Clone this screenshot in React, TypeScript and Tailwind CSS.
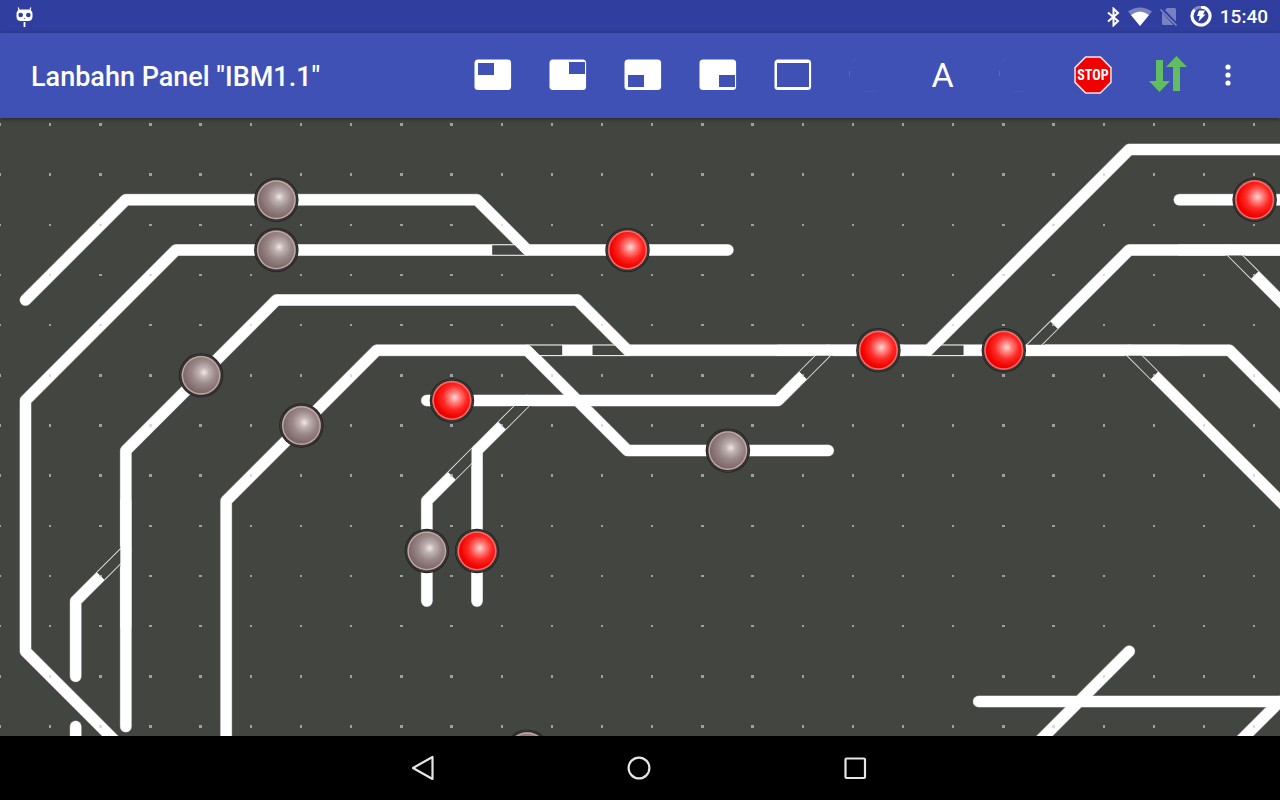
import type { ReactNode } from "react";

const UNIT = 25.085;
const ORIGIN_Y = 124.5;

type Point = [number, number];

const px = (a: number) => 0.4 + a * UNIT;
const py = (b: number) => ORIGIN_Y + b * UNIT;
const toPoints = (points: Point[]) => points.map(([a, b]) => `${px(a)},${py(b)}`).join(" ");

const tracks: Point[][] = [
  [[29, 5], [7, 5], [1, 11], [1, 21], [6, 26]],
  [[5, 24], [5, 13], [11, 7], [23, 7]],
  [[9, 27], [9, 15], [15, 9], [49, 9], [54, 14]],
  [[17, 11], [31, 11], [33, 9]],
  [[21, 11], [19, 13]],
  [[19, 13], [17, 15], [17, 24 - 5]],
  [[5, 17], [3, 19], [3, 22]],
  [[3, 24], [3, 27]],
  [[41, 9], [45, 5], [54, 5]],
  [[49, 5], [54, 10]],
  [[45, 9], [54, 18]],
  [[47, 3], [54, 3]],
  [[39, 23], [54, 23]],
  [[45, 21], [40, 26]],
  [[51, 23], [48, 26]],
];

const straightGaps: [Point, number][] = [
  [[21, 5], -1],
  [[21, 9], 1],
  [[25, 9], -1],
  [[37, 9], 1],
];

const diagonalGaps: [Point, Point][] = [
  [[33, 9], [32, 10]],
  [[21, 11], [20, 12]],
  [[19, 13], [18, 14]],
  [[5, 17], [4, 18]],
  [[41, 9], [42, 8]],
  [[49, 5], [50, 6]],
  [[45, 9], [46, 10]],
];

const divergingTracks: Point[][] = [
  [[1, 7], [5, 3], [19, 3], [21, 5]],
  [[23, 7], [25, 9]],
  [[21, 9], [25, 13], [33, 13]],
  [[37, 9], [45, 1], [54, 1]],
  [[19, 13], [19, 19]],
];

const throughTracks: Point[][] = [
  [[31, 9], [36, 9]],
  [[40, 9], [47, 9]],
  [[19, 11], [24, 11]],
  [[5, 15], [5, 20]],
  [[47, 5], [52, 5]],
];

const sensors: { at: Point; on: boolean }[] = [
  { at: [11, 3], on: false },
  { at: [11, 5], on: false },
  { at: [25, 5], on: true },
  { at: [8, 10], on: false },
  { at: [12, 12], on: false },
  { at: [18, 11], on: true },
  { at: [29, 13], on: false },
  { at: [17, 17], on: false },
  { at: [19, 17], on: true },
  { at: [35, 9], on: true },
  { at: [40, 9], on: true },
  { at: [50, 3], on: true },
  { at: [21, 25], on: false },
];

function TrackLines({ lines, color, width }: { lines: Point[][]; color: string; width: number }) {
  return (
    <g fill="none" strokeLinecap="round" strokeLinejoin="round" stroke={color} strokeWidth={width}>
      {lines.map((line, i) => (
        <polyline key={i} points={toPoints(line)} />
      ))}
    </g>
  );
}

function Sensor({ at, on }: { at: Point; on: boolean }) {
  return (
    <g transform={`translate(${px(at[0])} ${py(at[1])})`}>
      <circle r="22.2" fill="#1d201e" />
      <circle r="21" fill="none" stroke="#454845" strokeWidth="0.8" />
      <circle r="20" fill={on ? "#7c5553" : "#5e4746"} />
      <circle r="19.4" fill={on ? "#ff6a66" : "#bfa8a8"} />
      <circle r="18" fill={on ? "url(#lampOn)" : "url(#lampOff)"} />
    </g>
  );
}

function TrackPlan() {
  const dots: Point[] = [];
  for (let a = 0; a <= 52; a += 2) for (let b = 0; b <= 24; b += 2) dots.push([a, b]);
  return (
    <svg
      className="absolute inset-0 h-full w-full"
      viewBox="0 118 1280 618"
      preserveAspectRatio="xMinYMin slice"
      role="img"
      aria-label="Track plan"
    >
      <defs>
        <radialGradient id="lampOn" cx="0.58" cy="0.42" r="0.66">
          <stop offset="0" stopColor="#ffdcd8" />
          <stop offset="0.2" stopColor="#ff8a86" />
          <stop offset="0.5" stopColor="#ff2a26" />
          <stop offset="0.8" stopColor="#f00400" />
          <stop offset="1" stopColor="#e00000" />
        </radialGradient>
        <radialGradient id="lampOff" cx="0.58" cy="0.42" r="0.66">
          <stop offset="0" stopColor="#f0e8e8" />
          <stop offset="0.2" stopColor="#c2b4b4" />
          <stop offset="0.5" stopColor="#9b8888" />
          <stop offset="0.8" stopColor="#826e6d" />
          <stop offset="1" stopColor="#755f5e" />
        </radialGradient>
      </defs>
      <TrackLines lines={tracks} color="#a8a4a8" width={12} />
      <TrackLines lines={divergingTracks} color="#a8a4a8" width={12} />
      <TrackLines lines={tracks} color="#ffffff" width={11} />
      {diagonalGaps.map(([p, q], i) => {
        const line = { x1: px(p[0]), y1: py(p[1]), x2: px(q[0]), y2: py(q[1]) };
        return (
          <g key={i}>
            <line {...line} stroke="#434541" strokeWidth="14" />
            <line {...line} stroke="#e4e4e4" strokeWidth="11.8" />
            <line {...line} stroke="#434541" strokeWidth="10" />
          </g>
        );
      })}
      {straightGaps.map(([p, dir], i) => (
        <line
          key={i}
          x1={px(p[0])}
          y1={py(p[1])}
          x2={px(p[0]) + dir * 35}
          y2={py(p[1])}
          stroke="#434541"
          strokeWidth="9.4"
        />
      ))}
      <TrackLines lines={divergingTracks} color="#ffffff" width={11} />
      <TrackLines lines={throughTracks} color="#ffffff" width={11} />
      <g fill="#cdcdcd" fillOpacity="0.675" shapeRendering="crispEdges">
        {dots.map(([a, b]) => (
          <rect key={`${a}-${b}`} x={a * UNIT - 1.2} y={py(b) - 1.2} width="2.4" height="2.4" />
        ))}
      </g>
      {sensors.map((s) => (
        <Sensor key={s.at.join("-")} at={s.at} on={s.on} />
      ))}
    </svg>
  );
}

function ActionButton({ label, children }: { label: string; children: ReactNode }) {
  return (
    <button type="button" aria-label={label} className="flex h-full w-[75px] items-center justify-center">
      {children}
    </button>
  );
}

function QuadrantIcon({ x, y, w = 16, h = 12 }: { x: number; y: number; w?: number; h?: number }) {
  return (
    <svg width="38" height="32" viewBox="0 0 38 32" aria-hidden="true">
      <rect x="0.5" y="0.5" width="36.6" height="30.6" rx="3.5" fill="#ffffff" />
      <rect x={x} y={y} width={w} height={h} fill="#3f51b5" />
    </svg>
  );
}

function FaintIcon() {
  return (
    <svg width="38" height="38" viewBox="0 0 38 38" fill="none" stroke="#ffffff" aria-hidden="true">
      <path d="M0.500 15v5" strokeOpacity="0.14" />
      <path d="M3 6Q5 3 7 2M15 35.500h11" strokeOpacity="0.05" />
    </svg>
  );
}

function StopIcon() {
  return (
    <svg width="38" height="38" viewBox="0 0 38 38" aria-hidden="true">
      <path d="M11.300 0.300h15.400l11 11v15.400l-11 11H11.300l-11-11V11.300z" fill="#f4e4ec" />
      <path d="M12 1.800h14L36.200 12v14L26 36.200H12L1.800 26V12z" fill="#f00000" />
      <text
        x="19"
        y="24"
        textAnchor="middle"
        fill="#ffffff"
        fontSize="14"
        fontWeight="700"
        fontFamily="'Roboto Condensed', 'Liberation Sans Narrow', Roboto, sans-serif"
      >
        STOP
      </text>
    </svg>
  );
}

export default function App() {
  return (
    <div className="flex h-screen flex-col overflow-hidden bg-black font-['Roboto',sans-serif] text-white">
      <div className="flex h-[33px] shrink-0 items-center justify-between bg-[#303f9f] pr-3 pl-4">
        <svg width="17" height="20" viewBox="0 0 17 20" fill="none" aria-hidden="true">
          <path d="M2.200 0.500l1.300 4M14.800 0.500l-1.300 4" stroke="#fff" strokeWidth="1.200" />
          <path
            fill="#fff"
            fillRule="evenodd"
            d="M5 2.500h7c3 0 4.500 1.500 4.500 4.500v2.500c0 3-1.500 4.500-4.500 4.500H5c-3 0-4.500-1.500-4.500-4.500V7c0-3 1.500-4.500 4.500-4.500zM4.700 5.700a2.300 2.300 0 1 0 0 4.600 2.300 2.300 0 0 0 0-4.600zm7.600 0a2.300 2.300 0 1 0 0 4.600 2.300 2.300 0 0 0 0-4.600zM8.500 11l-1 1h2z"
          />
          <path d="M8.500 15v5" stroke="#fff" strokeWidth="1.800" />
        </svg>
        <div className="flex items-center">
          <svg width="13" height="20" viewBox="0 0 13 20" fill="none" stroke="#fff" strokeWidth="2" aria-hidden="true">
            <path d="M1 5.500l10 8.500-4.500 4.300V1.700L11 6 1 14.500" />
          </svg>
          <svg className="ml-2" width="24" height="19" viewBox="0 0 24 19" aria-hidden="true">
            <path d="M0 4.500Q12-3.500 24 4.500L12 19z" fill="#fff" fillOpacity="0.35" />
            <path d="M3 8Q12 1 21 8L12 19z" fill="#fff" />
          </svg>
          <svg className="ml-2" width="18" height="19" viewBox="0 0 18 19" aria-hidden="true">
            <path d="M7 1h7.500q1.500 0 1.500 1.500v12L5 3z" fill="#fff" fillOpacity="0.35" />
            <path d="M2 5.500L13.500 18H3.500Q2 18 2 16.500z" fill="#fff" fillOpacity="0.35" />
            <path d="M0.500 2.500l16 16" stroke="#fff" strokeOpacity="0.4" strokeWidth="1.500" />
          </svg>
          <svg className="ml-3" width="22" height="22" viewBox="0 0 22 22" fill="none" aria-hidden="true">
            <circle cx="11" cy="10" r="9" stroke="#fff" strokeOpacity="0.4" strokeWidth="3" />
            <path d="M11 1A9 9 0 1 1 4.500 3.800" stroke="#fff" strokeWidth="3" />
            <path d="M9 4.500h6l-2 4h2.500l-7 7 1.200-5.500H7z" fill="#fff" />
          </svg>
          <time className="ml-2 text-[19px] leading-6 font-medium">15:40</time>
        </div>
      </div>

      <header className="relative z-10 flex h-[85px] shrink-0 items-center bg-[#3f51b5] pr-[29px] pl-[31px] shadow-[0_1px_4px_rgba(0,0,0,0.45)]">
        <h1 className="flex-1 pt-[2px] text-[27px] leading-8 font-medium whitespace-nowrap">Lanbahn Panel "IBM1.1"</h1>
        <div className="flex h-full items-center pb-[2px]">
          <ActionButton label="Upper left quadrant">
            <QuadrantIcon x={4} y={4} />
          </ActionButton>
          <ActionButton label="Upper right quadrant">
            <QuadrantIcon x={20} y={3} />
          </ActionButton>
          <ActionButton label="Lower left quadrant">
            <QuadrantIcon x={4} y={16} />
          </ActionButton>
          <ActionButton label="Lower right quadrant">
            <QuadrantIcon x={20} y={16} />
          </ActionButton>
          <ActionButton label="Full panel">
            <QuadrantIcon x={3} y={4} w={32} h={24} />
          </ActionButton>
          <ActionButton label="Address mode">
            <FaintIcon />
          </ActionButton>
          <button type="button" className="h-full w-[75px] text-[34px] leading-10">
            A
          </button>
          <ActionButton label="Route mode">
            <FaintIcon />
          </ActionButton>
          <ActionButton label="Stop">
            <StopIcon />
          </ActionButton>
          <ActionButton label="Connection">
            <svg width="38" height="38" viewBox="0 0 38 38" fill="#62bd62" aria-hidden="true">
              <path d="M7 4h7v21h7L10.500 36 0 25h7z" />
              <path d="M24 35h7V11h7L27.500 0 17 11h7z" />
            </svg>
          </ActionButton>
          <button type="button" aria-label="More options" className="flex h-full w-[46px] items-center justify-center">
            <svg width="6" height="22" viewBox="0 0 6 22" fill="#fff" aria-hidden="true">
              <circle cx="3" cy="3" r="2.600" />
              <circle cx="3" cy="11" r="2.600" />
              <circle cx="3" cy="19" r="2.600" />
            </svg>
          </button>
        </div>
      </header>

      <main className="relative min-h-0 flex-1 overflow-hidden bg-[#434541]">
        <TrackPlan />
      </main>

      <nav className="flex h-16 shrink-0 items-center justify-center bg-black pr-[3px]">
        <button type="button" aria-label="Back" className="flex h-full w-[216px] items-center justify-center">
          <svg width="24" height="26" viewBox="0 0 24 26" fill="none" stroke="#e6e6e6" strokeWidth="2.200" strokeLinejoin="round" aria-hidden="true">
            <path d="M21.500 2v22L2 13z" />
          </svg>
        </button>
        <button type="button" aria-label="Home" className="flex h-full w-[216px] items-center justify-center">
          <svg width="24" height="24" viewBox="0 0 24 24" fill="none" stroke="#e6e6e6" strokeWidth="2.200" aria-hidden="true">
            <circle cx="12" cy="12" r="10.400" />
          </svg>
        </button>
        <button type="button" aria-label="Recent apps" className="flex h-full w-[216px] items-center justify-center">
          <svg width="24" height="24" viewBox="0 0 24 24" fill="none" stroke="#e6e6e6" strokeWidth="2.200" aria-hidden="true">
            <rect x="2.500" y="2.500" width="19.500" height="19.500" rx="1" />
          </svg>
        </button>
      </nav>
    </div>
  );
}
